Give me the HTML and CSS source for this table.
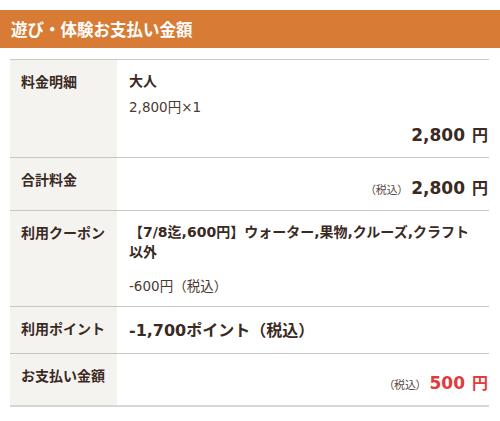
FILE: index.html
```html
<!DOCTYPE html>
<html lang="ja">
<head>
<meta charset="utf-8">
<link rel="stylesheet" href="styles.css">
</head>
<body>
<h2 class="head">遊び・体験お支払い金額</h2>
<div class="table">
  <div class="row">
    <div class="label">料金明細</div>
    <div class="value">
      <p class="strong">大人</p>
      <p class="sub">2,800円×1</p>
      <p class="total total-first"><span class="num">2,800</span><span class="yen">円</span></p>
    </div>
  </div>
  <div class="row">
    <div class="label">合計料金</div>
    <div class="value">
      <p class="total"><span class="tax">（税込）</span><span class="num">2,800</span><span class="yen">円</span></p>
    </div>
  </div>
  <div class="row">
    <div class="label">利用クーポン</div>
    <div class="value">
      <p class="strong coupon">【7/8迄,600円】ウォーター,果物,クルーズ,クラフト以外</p>
      <p class="sub discount">-600円（税込）</p>
    </div>
  </div>
  <div class="row">
    <div class="label">利用ポイント</div>
    <div class="value">
      <p class="points">-1,700ポイント（税込）</p>
    </div>
  </div>
  <div class="row row-last">
    <div class="label">お支払い金額</div>
    <div class="value">
      <p class="total pay"><span class="tax">（税込）</span><span class="num">500</span><span class="yen">円</span></p>
    </div>
  </div>
</div>
</body>
</html>
```
FILE: styles.css
```css
* { box-sizing: border-box; }
html, body { margin: 0; padding: 0; background: #fff; }
body {
  padding-top: 10px;
  font-family: "DejaVu Sans", "Noto Sans CJK JP", sans-serif;
  color: #3a2a1f;
}
p { margin: 0; }
.head {
  margin: 0;
  height: 38px;
  background: #d87b35;
  color: #fff;
  font-size: 16.5px;
  font-weight: bold;
  line-height: 38px;
  padding-left: 11px;
  font-family: "Noto Sans CJK JP", sans-serif;
}
.table {
  margin: 11px 11px 0 10px;
  border-top: 1px solid #cac8c6;
}
.row {
  display: grid;
  grid-template-columns: 107px 1fr;
  border-bottom: 1px solid #c8c6c4;
}
.row-last { border-bottom: 2px solid #d6d6d6; }
.label {
  background: #f5f3f0;
  padding: 11px 0 0 11px;
  font-size: 14px;
  font-weight: bold;
  line-height: 20px;
  font-family: "Noto Sans CJK JP", sans-serif;
}
.value {
  padding: 11px 1px 10px 12px;
  font-size: 14px;
  line-height: 20px;
}
.strong { font-weight: bold; }
.sub { margin-top: 6px; color: #4a3a2f; font-size: 13.5px; height: 20px; }
.total {
  display: flex;
  justify-content: flex-end;
  align-items: baseline;
  height: 26px;
  line-height: 26px;
  margin-top: 5px;
  font-weight: bold;
}
.total-first { margin-top: 4px; }
.num { font-size: 17px; }
.yen {
  font-size: 16px;
  font-family: "Noto Sans CJK JP", sans-serif;
  font-weight: bold;
  margin-left: 7px;
}
.tax {
  font-size: 11px;
  font-weight: normal;
  color: #5a4a3f;
  margin-right: 8px;
  font-family: "Noto Sans CJK JP", sans-serif;
  font-feature-settings: "palt";
}
.coupon { padding-right: 6px; height: 40px; }
.discount { margin-top: 14px; }
.points {
  font-size: 16px;
  font-weight: bold;
  line-height: 24px;
  height: 24px;
  margin-top: 1px;
}
.pay { margin-top: 4px; }
.pay .num, .pay .yen { color: #e23b3b; }
```
